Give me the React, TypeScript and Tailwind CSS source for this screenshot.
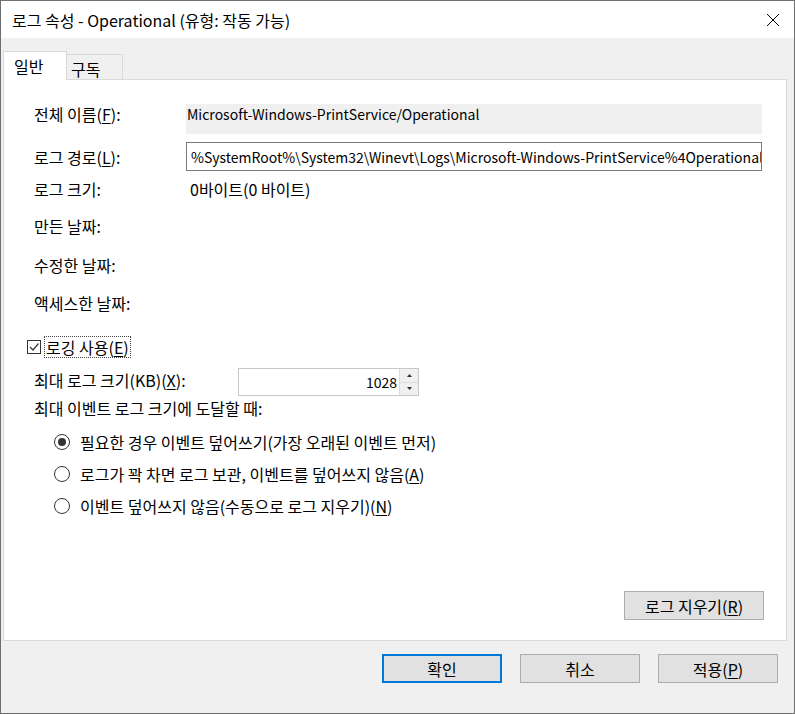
import React from "react";

const font = { fontFamily: '"Noto Sans CJK KR", "Noto Sans", sans-serif' };

function U({ c }: { c: string }) {
  return <span className="underline underline-offset-2">{c}</span>;
}

function Radio({ checked, children }: { checked?: boolean; children: React.ReactNode }) {
  return (
    <div className="flex items-center h-[32px] pl-[50px]">
      <div className="w-[16px] h-[16px] rounded-full border border-[#333] bg-white flex items-center justify-center">
        {checked && <div className="w-[8px] h-[8px] rounded-full bg-[#333]" />}
      </div>
      <span className="ml-[10px]">{children}</span>
    </div>
  );
}

function Btn({ children, primary, w = "w-[120px]" }: { children: React.ReactNode; primary?: boolean; w?: string }) {
  return (
    <div
      className={`${w} h-[29px] flex items-center justify-center bg-[#e1e1e1] ${
        primary ? "border-2 border-[#0078d7]" : "border border-[#adadad]"
      }`}
    >
      {children}
    </div>
  );
}

export default function App() {
  return (
    <div
      style={font}
      className="w-[795px] h-[714px] bg-[#f0f0f0] border border-[#6f6f6f] flex flex-col text-[16px] text-black leading-none"
    >
      {/* title bar */}
      <div className="h-[37px] bg-white flex items-center justify-between pl-[11px] pr-[14px]">
        <span className="text-[16px]">로그 속성 - Operational (유형: 작동 가능)</span>
        <svg width="14" height="14" viewBox="0 0 14 14">
          <path d="M1 1 L13 13 M13 1 L1 13" stroke="#000" strokeWidth="1" />
        </svg>
      </div>

      {/* tabs */}
      <div className="flex items-end pl-[2px] mt-[12px] h-[29px]">
        <div className="w-[64px] h-[29px] bg-white border border-b-0 border-[#d9d9d9] flex items-center pl-[10px] relative z-10 -mb-[1px]">
          일반
        </div>
        <div className="w-[56px] h-[25px] bg-[#f0f0f0] border border-l-0 border-b-0 border-[#d9d9d9] flex items-center pl-[4px] pt-[4px]">
          구독
        </div>
      </div>

      {/* panel */}
      <div className="ml-[2px] w-[784px] h-[562px] bg-white border border-[#d9d9d9] flex flex-col pt-[24px]">
        <div className="flex items-center h-[30px]">
          <div className="w-[182px] pl-[30px] pb-[10px]">
            전체 이름(<U c="F" />):
          </div>
          <div className="w-[576px] h-[30px] bg-[#f0f0f0] flex items-center pl-[1px] pb-[10px] text-[14px]">
            Microsoft-Windows-PrintService/Operational
          </div>
        </div>
        <div className="flex items-center h-[29px] mt-[8px]">
          <div className="w-[182px] pl-[30px]">
            로그 경로(<U c="L" />):
          </div>
          <div className="w-[576px] h-[29px] bg-white border border-[#7a7a7a] flex items-center pl-[4px] whitespace-nowrap overflow-hidden text-[14px]">
            %SystemRoot%\System32\Winevt\Logs\Microsoft-Windows-PrintService%4Operational
          </div>
        </div>
        <div className="flex items-center h-[28px] mt-[4px]">
          <div className="w-[182px] pl-[30px]">로그 크기:</div>
          <div className="pl-[4px]">0바이트(0 바이트)</div>
        </div>
        <div className="flex items-center h-[28px] mt-[9px] pl-[30px]">만든 날짜:</div>
        <div className="flex items-center h-[28px] mt-[11px] pl-[30px]">수정한 날짜:</div>
        <div className="flex items-center h-[28px] mt-[10px] pl-[30px]">액세스한 날짜:</div>

        {/* logging checkbox */}
        <div className="flex items-center h-[22px] mt-[19px] pl-[23px]">
          <div className="w-[14px] h-[14px] border border-[#333] bg-white flex items-center justify-center">
            <svg width="12" height="12" viewBox="0 0 12 12">
              <path d="M2 6 L5 9 L10.5 2.5" stroke="#333" strokeWidth="1.2" fill="none" />
            </svg>
          </div>
          <span className="ml-[4px] px-[1px] py-[2px] outline-1 outline-dotted outline-[#444]">
            로깅 사용(<U c="E" />)
          </span>
        </div>

        {/* max size */}
        <div className="flex items-center h-[28px] mt-[10px]">
          <div className="w-[234px] pl-[30px] pb-[4px]">
            최대 로그 크기(KB)(<U c="X" />):
          </div>
          <div className="w-[181px] h-[28px] border border-[#c8c8c8] bg-white flex">
            <div className="flex-1 flex items-center justify-end pr-[2px] text-[14px]">1028</div>
            <div className="w-[19px] flex flex-col border-l border-[#dcdcdc]">
              <div className="flex-1 flex items-center justify-center bg-[#f0f0f0] border-b border-[#dcdcdc]">
                <svg width="5" height="3" viewBox="0 0 5 3">
                  <path d="M0 3 L2.5 0 L5 3 Z" fill="#333" />
                </svg>
              </div>
              <div className="flex-1 flex items-center justify-center bg-[#f0f0f0]">
                <svg width="5" height="3" viewBox="0 0 5 3">
                  <path d="M0 0 L2.5 3 L5 0 Z" fill="#333" />
                </svg>
              </div>
            </div>
          </div>
        </div>

        <div className="flex items-center h-[24px] mt-[0px] pl-[30px]">최대 이벤트 로그 크기에 도달할 때:</div>

        <div className="mt-[6px]">
          <Radio checked>필요한 경우 이벤트 덮어쓰기(가장 오래된 이벤트 먼저)</Radio>
          <Radio>
            로그가 꽉 차면 로그 보관, 이벤트를 덮어쓰지 않음(<U c="A" />)
          </Radio>
          <Radio>
            이벤트 덮어쓰지 않음(수동으로 로그 지우기)(<U c="N" />)
          </Radio>
        </div>

        <div className="flex-1" />
        <div className="flex justify-end pr-[22px] pb-[20px]">
          <Btn w="w-[140px]">
            로그 지우기(<U c="R" />)
          </Btn>
        </div>
      </div>

      {/* bottom buttons */}
      <div className="flex justify-end gap-[18px] pr-[16px] mt-[13px]">
        <Btn primary>확인</Btn>
        <Btn>취소</Btn>
        <Btn>
          적용(<U c="P" />)
        </Btn>
      </div>
    </div>
  );
}
